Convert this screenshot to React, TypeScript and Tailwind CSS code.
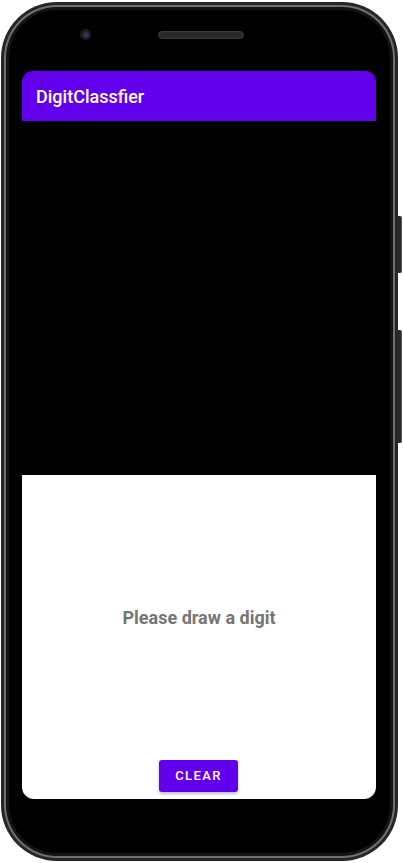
export default function App() {
  return (
    <div className="relative w-[403px] h-[863px] bg-white pt-[2px] pl-[1px] font-['Roboto',sans-serif]">
      {/* side buttons */}
      <div className="absolute left-[396px] top-[216px] w-[6px] h-[57px] rounded-r-[2px] bg-[#2a2a2a] border-r border-[#555]" />
      <div className="absolute left-[396px] top-[330px] w-[6px] h-[113px] rounded-r-[2px] bg-[#2a2a2a] border-r border-[#555]" />

      <div className="relative w-[397px] h-[859px] rounded-[56px] bg-[#262626] p-[3px]">
        <div className="w-full h-full rounded-[53px] bg-[#6f6f6f] p-[2px]">
          <div className="w-full h-full rounded-[51px] bg-[#141414] p-[3px]">
            <div className="w-full h-full rounded-[48px] bg-black flex flex-col px-[13px] pr-[14px]">
              {/* top bezel */}
              <div className="h-[61px] flex items-start">
                <div className="mt-[19px] ml-[58px] w-[11px] h-[11px] rounded-full bg-[#1a1a22] flex items-center justify-center">
                  <div className="w-[6px] h-[6px] rounded-full bg-[#2b3550]" />
                </div>
                <div className="mt-[21px] ml-[67px] w-[86px] h-[8px] rounded-full bg-[#2a2a2a] border border-[#3a3a3a]" />
              </div>

              {/* app bar */}
              <div className="h-[50px] bg-[#6200ee] rounded-t-[11px] flex items-center pl-[14px]">
                <span className="text-white text-[18px] font-medium">DigitClassfier</span>
              </div>

              {/* drawing area */}
              <div className="h-[354px] bg-black" />

              {/* result area */}
              <div className="h-[324px] bg-white rounded-b-[12px] flex flex-col items-center">
                <div className="flex-1 flex items-center justify-center pt-[0px]">
                  <span className="text-[#757575] text-[18px] font-bold">Please draw a digit</span>
                </div>
                <button className="mb-[7px] -ml-[1px] w-[79px] h-[32px] rounded-[3px] bg-[#6200ee] text-white text-[13px] font-medium tracking-[1.4px] shadow-[0_2px_3px_rgba(0,0,0,0.25)]">
                  CLEAR
                </button>
              </div>
            </div>
          </div>
        </div>
      </div>
    </div>
  );
}
